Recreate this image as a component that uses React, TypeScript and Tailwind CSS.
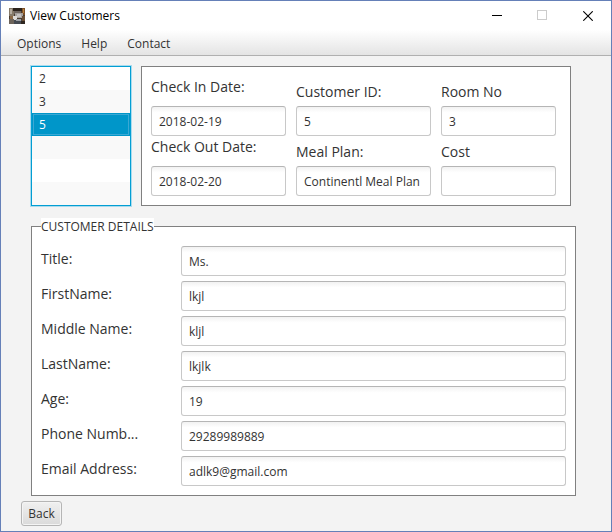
import React from "react";

const labelText = "text-[14px] text-[#333333]";

type FieldProps = { id: string; value: string };

function TextField({ id, value }: FieldProps) {
  return (
    <input
      id={id}
      type="text"
      defaultValue={value}
      className="h-[30px] w-full min-w-0 rounded-[3px] border border-[#c8c8c8] border-t-[#b5b5b5] bg-linear-to-b from-[#f2f2f2] to-white to-20% px-[7px] text-[12px] text-[#333333] outline-none"
    />
  );
}

const stay = [
  { id: "check-in", label: "Check In Date:", value: "2018-02-19", line: "leading-[22px]" },
  { id: "customer-id", label: "Customer ID:", value: "5", line: "leading-[32px]" },
  { id: "room-no", label: "Room No", value: "3", line: "leading-[32px]" },
  { id: "check-out", label: "Check Out Date:", value: "2018-02-20", line: "leading-[22px]" },
  { id: "meal-plan", label: "Meal Plan:", value: "Continentl Meal Plan", line: "leading-[32px]" },
  { id: "cost", label: "Cost", value: "", line: "leading-[32px]" },
];

const details = [
  { id: "title", label: "Title:", value: "Ms." },
  { id: "first-name", label: "FirstName:", value: "lkjl" },
  { id: "middle-name", label: "Middle Name:", value: "kljl" },
  { id: "last-name", label: "LastName:", value: "lkjlk" },
  { id: "age", label: "Age:", value: "19" },
  { id: "phone", label: "Phone Numb...", value: "29289989889" },
  { id: "email", label: "Email Address:", value: "adlk9@gmail.com" },
];

const customers = ["2", "3", "5", "", "", ""];

function AppIcon() {
  return (
    <svg width="16" height="16" viewBox="0 0 16 16" shapeRendering="crispEdges" aria-hidden="true">
      <rect width="16" height="16" fill="#4a3c30" />
      <rect width="5" height="8" fill="#857968" />
      <rect x="1" y="1" width="2" height="5" fill="#b5aca0" />
      <rect x="4" width="9" height="3" fill="#2b221c" />
      <rect x="13" width="3" height="7" fill="#7d5026" />
      <rect x="14" y="1" width="1" height="4" fill="#b9823f" />
      <rect x="5" y="3" width="7" height="3" fill="#6e655f" />
      <rect x="6" y="5" width="8" height="5" fill="#a5a09d" />
      <rect x="8" y="6" width="4" height="3" fill="#c4c1bf" />
      <rect x="4" y="8" width="4" height="4" fill="#dcdad7" />
      <rect x="1" y="8" width="3" height="3" fill="#8b6a48" />
      <rect y="11" width="5" height="5" fill="#6d645b" />
      <rect x="5" y="12" width="8" height="4" fill="#454a52" />
      <rect x="7" y="11" width="5" height="2" fill="#9ea1a6" />
      <rect x="13" y="8" width="3" height="5" fill="#6b4f36" />
      <rect x="12" y="13" width="4" height="3" fill="#2f2721" />
    </svg>
  );
}

export default function App() {
  return (
    <div className="flex min-h-screen flex-col border border-[#6580b8] bg-[#f3f3f3] font-['Open_Sans',sans-serif] text-[12px] text-[#333333]">
      <header className="flex h-[29px] items-center bg-white pl-[8px]">
        <AppIcon />
        <h1 className="ml-[5px] flex-1 text-[12px] text-black">View Customers</h1>
        <button type="button" aria-label="Minimize" className="flex h-full w-[45px] items-center justify-center">
          <svg width="11" height="11" viewBox="0 0 11 11" shapeRendering="crispEdges">
            <path d="M0 5.5h10" stroke="#000" />
          </svg>
        </button>
        <button type="button" aria-label="Maximize" disabled className="flex h-full w-[45px] items-center justify-center">
          <svg width="11" height="11" viewBox="0 0 11 11" shapeRendering="crispEdges">
            <rect x="0.5" y="0.5" width="9" height="9" fill="none" stroke="#cccccc" />
          </svg>
        </button>
        <button type="button" aria-label="Close" className="flex h-full w-[46px] items-center justify-center">
          <svg width="10" height="10" viewBox="0 0 10 10">
            <path d="M0.3 0.3l9.4 9.4M9.7 0.3l-9.4 9.4" stroke="#000" strokeWidth="1.1" />
          </svg>
        </button>
      </header>

      <nav className="flex h-[26px] items-center gap-[20px] border-b border-[#b0b0b0] bg-linear-to-b from-white to-[#e4e4e4] pt-[2px] pl-[16px]">
        <button type="button">Options</button>
        <button type="button">Help</button>
        <button type="button">Contact</button>
      </nav>

      <main className="flex flex-col pt-[10px] pr-[35px] pl-[30px]">
        <div className="mr-[5px] flex gap-[10px]">
          <ul
            role="listbox"
            aria-label="Customers"
            className="h-[140px] w-[100px] shrink-0 overflow-hidden border border-[#039ed3] bg-white shadow-[0_0_0_1px_#a9dbee]"
          >
            {customers.map((c, i) => (
              <li
                key={i}
                role="option"
                aria-selected={c === "5"}
                className={
                  c === "5"
                    ? "h-[23px] border border-[#0096c9] bg-[#0096c9] px-[6px] leading-[21px] text-white inset-ring inset-ring-[#3aa8d4]"
                    : "h-[23px] px-[7px] leading-[23px] odd:bg-white even:bg-[#f9f9f9]"
                }
              >
                {c}
              </li>
            ))}
          </ul>

          <section className="grid h-[140px] flex-1 grid-cols-[135fr_135fr_115fr] content-start gap-x-[10px] border border-[#808080] bg-white pt-[9px] pr-[14px] pl-[9px]">
            {stay.map((f) => (
              <div key={f.id} className="flex min-w-0 flex-col">
                <div className="h-[30px]">
                  <label htmlFor={f.id} className={`block whitespace-nowrap ${labelText} ${f.line}`}>
                    {f.label}
                  </label>
                </div>
                <TextField id={f.id} value={f.value} />
              </div>
            ))}
          </section>
        </div>

        <section
          aria-labelledby="details-heading"
          className="mt-[20px] border border-[#808080] bg-white px-[9px] pb-[9px]"
        >
          <h2 id="details-heading" className="-mt-[9px] mb-[10px] w-fit bg-white text-[12px] leading-[18px]">
            CUSTOMER DETAILS
          </h2>
          <div className="flex flex-col gap-[5px]">
            {details.map((f) => (
              <div key={f.id} className="flex">
                <label htmlFor={f.id} className={`w-[140px] shrink-0 leading-[26px] ${labelText}`}>
                  {f.label}
                </label>
                <TextField id={f.id} value={f.value} />
              </div>
            ))}
          </div>
        </section>
      </main>

      <footer className="mt-[5px] pl-[20px]">
        <button
          type="button"
          className="block h-[25px] w-[41px] rounded-[3px] border border-[#b5b5b5] bg-linear-to-b from-[#f0f0f0] to-[#dadada] text-[12px] inset-ring inset-ring-[#f4f4f4]"
        >
          Back
        </button>
      </footer>
    </div>
  );
}
